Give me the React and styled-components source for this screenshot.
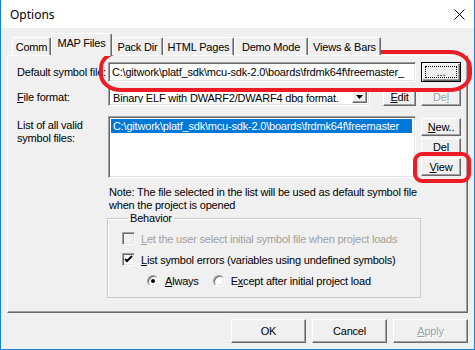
import React from 'react';
import styled, { createGlobalStyle } from 'styled-components';

const GlobalStyle = createGlobalStyle`
  body {
    margin: 0;
    background: #fff;
  }
  * {
    box-sizing: border-box;
  }
`;

const FONT = `"Liberation Sans", Arial, sans-serif`;

// Window frame

const Window = styled.div`
  position: relative;
  width: 475px;
  height: 350px;
  display: flex;
  flex-direction: column;
  border: 1px solid #1883d7;
  border-top: none;
  background: #f0f0f0;
  font-family: ${FONT};
  font-size: 11px;
  letter-spacing: -0.2px;
  color: #000;
`;

const TitleBar = styled.div`
  height: 28px;
  flex: none;
  background: #fff;
  display: flex;
  align-items: center;
  justify-content: space-between;
  padding: 0 9px 0 9px;
  font-family: "Noto Sans", "Open Sans", sans-serif;
  font-size: 12px;
  letter-spacing: 0;
`;

const Client = styled.div`
  flex: 1;
  display: flex;
  flex-direction: column;
  padding: 5px 6px 0 6px;
`;

// Tabs

const TabStrip = styled.div`
  display: flex;
  align-items: flex-end;
  height: 22px;
  padding-left: 5px;
  position: relative;
  z-index: 1;
`;

const Tab = styled.div`
  width: ${p => p.$w}px;
  height: ${p => (p.$active ? 23 : 18)}px;
  margin-bottom: ${p => (p.$active ? -1 : 0)}px;
  background: #f0f0f0;
  border: 1px solid #fff;
  border-bottom: none;
  border-right-color: #696969;
  box-shadow: inset -1px 0 #a0a0a0;
  border-radius: 2px 2px 0 0;
  display: flex;
  align-items: ${p => (p.$active ? 'flex-start' : 'center')};
  padding-top: ${p => (p.$active ? 3 : 0)}px;
  justify-content: center;
  white-space: nowrap;
`;

const Panel = styled.div`
  height: 258px;
  border: 1px solid #fff;
  border-right-color: #696969;
  border-bottom-color: #696969;
  box-shadow: inset -1px -1px #a0a0a0;
  display: flex;
  flex-direction: column;
  padding: 6px 6px 0 9px;
`;

// Form rows

const Row = styled.div`
  display: flex;
  align-items: ${p => p.$align || 'center'};
  margin-top: ${p => p.$mt || 0}px;
`;

const Label = styled.div`
  width: 91px;
  flex: none;
  line-height: 13px;
  white-space: nowrap;
  padding-top: ${p => p.$pt || 0}px;
  align-self: ${p => (p.$top ? 'flex-start' : 'center')};
`;

const Key = styled.span`
  text-decoration: underline;
  text-underline-offset: 1px;
`;

const sunken = `
  border: 1px solid #a0a0a0;
  border-right-color: #fff;
  border-bottom-color: #fff;
  box-shadow: inset 1px 1px #696969, inset -1px -1px #e3e3e3;
`;

const TextBox = styled.div`
  width: ${p => p.$w}px;
  height: ${p => p.$h}px;
  background: #fff;
  ${sunken}
  padding: 3px 3px 0 3px;
  white-space: nowrap;
  overflow: hidden;
  line-height: 13px;
`;

const Select = styled.div`
  width: 262px;
  height: 18px;
  background: #fff;
  ${sunken}
  display: flex;
  align-items: stretch;
  padding: 2px;
  line-height: 12px;
`;

const SelectText = styled.div`
  flex: 1;
  padding: 1px 0 0 2px;
  white-space: nowrap;
  overflow: hidden;
`;

const ArrowButton = styled.div`
  width: 15px;
  background: #f0f0f0;
  border: 1px solid #fff;
  border-right-color: #696969;
  border-bottom-color: #696969;
  box-shadow: inset -1px -1px #a0a0a0;
  display: flex;
  align-items: center;
  justify-content: center;
`;

const Button = styled.div`
  width: ${p => p.$w}px;
  height: ${p => p.$h}px;
  margin-left: ${p => p.$ml || 0}px;
  background: #f0f0f0;
  border: 1px solid #fff;
  border-right-color: #696969;
  border-bottom-color: #696969;
  box-shadow: inset -1px -1px #a0a0a0;
  display: flex;
  align-items: center;
  justify-content: center;
  flex: none;
  color: ${p => (p.$disabled ? '#a0a0a0' : '#000')};
  text-shadow: ${p => (p.$disabled ? '1px 1px #fff' : 'none')};
`;

const DefaultButton = styled(Button)`
  border: 1px solid #000;
  box-shadow: inset 1px 1px #fff, inset -1px -1px #696969, inset -2px -2px #a0a0a0;
  padding: 3px;
`;

const FocusRect = styled.div`
  width: 100%;
  height: 100%;
  border: 1px dotted #000;
  display: flex;
  align-items: flex-end;
  justify-content: center;
  line-height: 9px;
`;

const ListBox = styled.div`
  width: 309px;
  height: 62px;
  background: #fff;
  ${sunken}
  padding: 2px;
`;

const ListItem = styled.div`
  background: ${p => (p.$selected ? '#0078d7' : 'transparent')};
  color: ${p => (p.$selected ? '#fff' : '#000')};
  height: 14px;
  line-height: 14px;
  padding-left: 2px;
  white-space: nowrap;
  width: 301px;
`;

const SideButtons = styled.div`
  display: flex;
  flex-direction: column;
  gap: 2px;
  margin-left: 5px;
  padding-top: 2px;
`;

const Note = styled.div`
  margin: 8px 0 0 92px;
  line-height: 13px;
`;

// Behavior group

const Group = styled.fieldset`
  margin: 0 0 0 90px;
  width: 314px;
  height: 86px;
  padding: 7px 0 0 14px;
  border: 1px solid #c8c8c8;
  box-shadow: inset 1px 1px #fff;
  display: flex;
  flex-direction: column;
  gap: 8px;
`;

const Legend = styled.legend`
  margin-left: 6px;
  padding: 0 2px;
  line-height: 13px;
`;

const Option = styled.div`
  display: flex;
  align-items: center;
  gap: 6px;
  height: 13px;
  color: ${p => (p.$disabled ? '#a0a0a0' : '#000')};
`;

const Box = styled.div`
  width: 13px;
  height: 13px;
  flex: none;
  background: ${p => (p.$disabled ? '#f0f0f0' : '#fff')};
  ${sunken}
  display: flex;
  align-items: center;
  justify-content: center;
`;

const Radio = styled.div`
  width: 12px;
  height: 12px;
  flex: none;
  border-radius: 50%;
  background: #fff;
  border: 1px solid;
  border-color: #a0a0a0 #fff #fff #a0a0a0;
  box-shadow: inset 1px 1px #696969, inset -1px -1px #e3e3e3;
  display: flex;
  align-items: center;
  justify-content: center;
  &::after {
    content: '';
    width: 4px;
    height: 4px;
    border-radius: 50%;
    background: ${p => (p.$checked ? '#000' : 'transparent')};
  }
`;

const RadioRow = styled.div`
  display: flex;
  gap: 14px;
  margin-left: 25px;
`;

// Dialog buttons

const Footer = styled.div`
  display: flex;
  justify-content: flex-end;
  gap: 6px;
  margin-top: 6px;
`;

// Red annotation marks (drawn over the dialog)

const Mark = styled.div`
  position: absolute;
  left: ${p => p.$x}px;
  top: ${p => p.$y}px;
  width: ${p => p.$w}px;
  height: ${p => p.$h}px;
  border: 4px solid #ed1c24;
  border-radius: ${p => p.$r};
  pointer-events: none;
`;

const CloseIcon = () => (
  <svg width="11" height="11" viewBox="0 0 11 11">
    <path d="M0.5 0.5 L10.5 10.5 M10.5 0.5 L0.5 10.5" stroke="#000" strokeWidth="1" />
  </svg>
);

const DownArrow = () => (
  <svg width="7" height="4" viewBox="0 0 7 4">
    <path d="M0 0 H7 L3.5 4 Z" fill="#000" />
  </svg>
);

const Check = () => (
  <svg width="9" height="9" viewBox="0 0 9 9">
    <path d="M1 4 L3 6 L8 1" stroke="#000" strokeWidth="2" fill="none" />
  </svg>
);

const PATH = 'C:\\gitwork\\platf_sdk\\mcu-sdk-2.0\\boards\\frdmk64f\\freemaster';

const tabs = [
  { label: 'Comm', w: 39 },
  { label: 'MAP Files', w: 61, active: true },
  { label: 'Pack Dir', w: 51 },
  { label: 'HTML Pages', w: 71 },
  { label: 'Demo Mode', w: 74 },
  { label: 'Views & Bars', w: 73 },
];

export default function App() {
  return (
    <>
      <GlobalStyle />
      <Window>
        <TitleBar>
          <span>Options</span>
          <CloseIcon />
        </TitleBar>
        <Client>
          <TabStrip>
            {tabs.map(t => (
              <Tab key={t.label} $w={t.w} $active={t.active}>{t.label}</Tab>
            ))}
          </TabStrip>
          <Panel>
            <Row>
              <Label>Default symbol file:</Label>
              <TextBox $w={308} $h={20}>{PATH}_</TextBox>
              <DefaultButton $w={40} $h={20} $ml={5}>
                <FocusRect>...</FocusRect>
              </DefaultButton>
            </Row>
            <Row $mt={6}>
              <Label><Key>F</Key>ile format:</Label>
              <Select>
                <SelectText>Binary ELF with DWARF2/DWARF4 dbg format.</SelectText>
                <ArrowButton><DownArrow /></ArrowButton>
              </Select>
              <Button $w={33} $h={18} $ml={13}><span><Key>E</Key>dit</span></Button>
              <Button $w={40} $h={18} $ml={5} $disabled><span>De<Key>l</Key></span></Button>
            </Row>
            <Row $mt={10} $align="flex-start">
              <Label $top $pt={3}>List of all valid<br />symbol files:</Label>
              <ListBox>
                <ListItem $selected>{PATH}</ListItem>
              </ListBox>
              <SideButtons>
                <Button $w={40} $h={18}><span><Key>N</Key>ew..</span></Button>
                <Button $w={40} $h={18}><span><Key>D</Key>el</span></Button>
                <Button $w={40} $h={18}><span><Key>V</Key>iew</span></Button>
              </SideButtons>
            </Row>
            <Note>
              Note: The file selected in the list will be used as default symbol file<br />
              when the project is opened
            </Note>
            <Group>
              <Legend>Behavior</Legend>
              <Option $disabled>
                <Box $disabled />
                <span><Key>L</Key>et the user select initial symbol file when project loads</span>
              </Option>
              <Option>
                <Box><Check /></Box>
                <span><Key>L</Key>ist symbol errors (variables using undefined symbols)</span>
              </Option>
              <RadioRow>
                <Option>
                  <Radio $checked />
                  <span><Key>A</Key>lways</span>
                </Option>
                <Option>
                  <Radio />
                  <span>E<Key>x</Key>cept after initial project load</span>
                </Option>
              </RadioRow>
            </Group>
          </Panel>
          <Footer>
            <Button $w={75} $h={24}>OK</Button>
            <Button $w={75} $h={24}>Cancel</Button>
            <Button $w={75} $h={24} $disabled><span><Key>A</Key>pply</span></Button>
          </Footer>
        </Client>
        <Mark $x={98} $y={50} $w={373} $h={42} $r="22px / 18px" />
        <Mark $x={412} $y={152} $w={58} $h={31} $r="9px" />
      </Window>
    </>
  );
}
